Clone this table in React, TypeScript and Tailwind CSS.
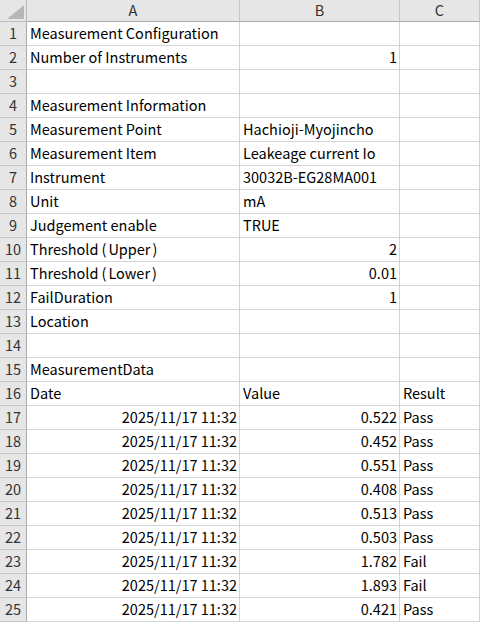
import React from "react";

type Cell = { v: React.ReactNode; right?: boolean };

const row = (
  a: React.ReactNode = "",
  b = "",
  c = "",
  aRight = false,
  bRight = false,
): Cell[] => [{ v: a, right: aRight }, { v: b, right: bRight }, { v: c }];

// Excel renders the full-width parens narrower than Noto's CJK ones
const paren = (name: string, inner: string) => (
  <>
    {name}
    <span className="ml-[3px] mr-[2px]">(</span>
    {inner}
    <span className="ml-[2px]">)</span>
  </>
);

const data: Cell[][] = [
  row("Measurement Configuration"),
  row("Number of Instruments", "1", "", false, true),
  row(),
  row("Measurement Information"),
  row("Measurement Point", "Hachioji-Myojincho"),
  row("Measurement Item", "Leakeage current Io"),
  row("Instrument", "30032B-EG28MA001"),
  row("Unit", "mA"),
  row("Judgement enable", "TRUE"),
  row(paren("Threshold", "Upper"), "2", "", false, true),
  row(paren("Threshold", "Lower"), "0.01", "", false, true),
  row("FailDuration", "1", "", false, true),
  row("Location"),
  row(),
  row("MeasurementData"),
  row("Date", "Value", "Result"),
  ...[
    ["0.522", "Pass"],
    ["0.452", "Pass"],
    ["0.551", "Pass"],
    ["0.408", "Pass"],
    ["0.513", "Pass"],
    ["0.503", "Pass"],
    ["1.782", "Fail"],
    ["1.893", "Fail"],
    ["0.421", "Pass"],
  ].map(([v, r]) => row("2025/11/17 11:32", v, r, true, true)),
];

export default function App() {
  return (
    <div
      className="w-[480px] h-[622px] overflow-hidden bg-white text-[14.5px] text-black"
      style={{ fontFamily: '"Noto Sans CJK JP", "Noto Sans", sans-serif' }}
    >
      <div className="grid grid-cols-[27px_213px_160px_80px] auto-rows-[24px] [grid-template-rows:22px]">
        {/* header row */}
        <div className="relative bg-[#e6e6e6] border-r border-b border-[#bdbdbd]">
          <svg className="absolute left-[7px] top-[5px]" width="17" height="14" viewBox="0 0 17 14">
            <path d="M17 0 L17 14 L0 14 Z" fill="#b7b7b7" />
          </svg>
        </div>
        {["A", "B", "C"].map((h) => (
          <div
            key={h}
            className="flex items-center justify-center bg-[#e6e6e6] border-r border-b border-r-[#c8c8c8] border-b-[#ababab] text-[#333] pb-[1px]"
          >
            {h}
          </div>
        ))}

        {data.map((cells, i) => (
          <React.Fragment key={i}>
            <div className="flex items-center justify-center bg-[#e6e6e6] border-r border-b border-r-[#ababab] border-b-[#c8c8c8] text-[#333] pb-[1px]">
              {i + 1}
            </div>
            {cells.map((c, j) => (
              <div
                key={j}
                className={`flex items-center whitespace-nowrap overflow-hidden border-r border-b border-[#d4d4d4] pb-[1px] ${
                  c.right ? "justify-end pr-[2px]" : "pl-[3px]"
                }`}
              >
                {c.v}
              </div>
            ))}
          </React.Fragment>
        ))}
      </div>
    </div>
  );
}
